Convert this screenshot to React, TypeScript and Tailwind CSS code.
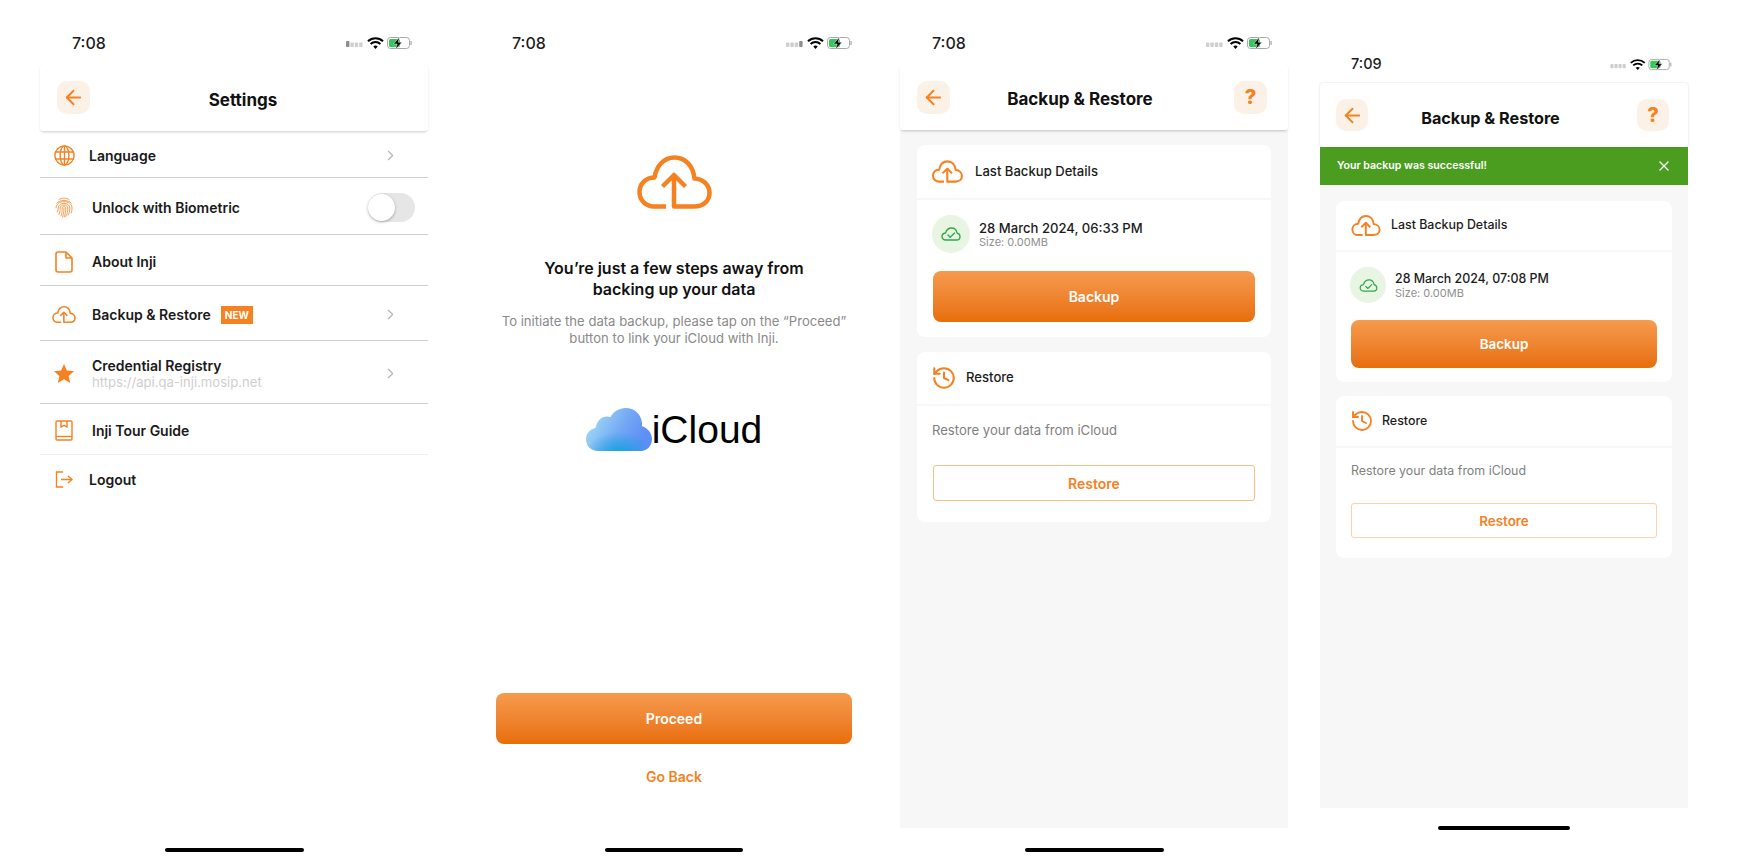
import { ArrowLeft, ChevronRight, History, X } from 'lucide-react'
import type { ReactNode } from 'react'

const orange = '#F68121'

function StatusBar({ time, dark, small }: { time: string; dark: number; small?: boolean }) {
  return (
    <div className={`flex items-center justify-between pr-4 ${small ? 'h-[83px] pt-[51px] pb-[6px] pl-[31px]' : 'h-[64px] pt-[30px] pb-[8px] pl-8'}`}>
      <span className={`font-medium text-[#1c1c1e] ${small ? 'text-[14.5px]' : 'text-base'}`}>{time}</span>
      <svg width={small ? 62 : 66} height={small ? 13 : 14} viewBox="0 0 66 14">
        {[0, 1, 2, 3].map(i => (
          <rect key={i} x={i * 4.4} y={i === dark ? 5 : 6.5} width="3.4" height={i === dark ? 6 : 4.5} rx="0.8" fill={i === dark ? '#8e8e8e' : '#cfcfcf'} />
        ))}
        <path d="M22 5.2a11 11 0 0 1 15 0M24.6 8a7.2 7.2 0 0 1 9.8 0" fill="none" stroke="#000" strokeWidth="2" />
        <path d="M27.3 10.6a3.3 3.3 0 0 1 4.4 0L29.5 13z" fill="#000" />
        <rect x="41.5" y="1.5" width="22" height="11" rx="3" fill="none" stroke="#a8a8a8" />
        <rect x="43" y="3" width="11" height="8" rx="1.5" fill="#35c759" />
        <rect x="64.5" y="5" width="1.2" height="4" fill="#a8a8a8" />
        <path d="M53.5 1 47.5 8h3.600l-1.600 5.500L56 6.200h-3.700z" fill="#000" stroke="#fff" strokeWidth="0.5" />
      </svg>
    </div>
  )
}

function SquareBtn({ children, small }: { children: ReactNode; small?: boolean }) {
  return (
    <div className={`flex items-center justify-center rounded-[10px] bg-[#FCF1E7] text-[#F68121] ${small ? 'h-[32px] w-[32px]' : 'h-[33px] w-[33px]'}`}>
      {children}
    </div>
  )
}

function CloudUpload({ w, h }: { w: number; h: number }) {
  return (
    <svg width={w} height={h} viewBox="0 0 75 54" fill="none" stroke={orange} strokeWidth={w > 50 ? 4.5 : 5} strokeLinejoin="round">
      <path d="M29 51.500H17C9 51.500 2.500 45.500 2.500 37S9 22.500 17.500 22.500C19.500 10.500 27 2.500 37.500 2.500S56 10.500 57.500 23.500C66 24 72.500 30 72.500 38S66 51.500 57 51.500H37V20" />
      <path d="M25.500 31.500 37 20l11.500 11.500" />
    </svg>
  )
}

function CloudOk({ w, h }: { w: number; h: number }) {
  return (
    <svg width={w} height={h} viewBox="0 0 20 14" fill="none" stroke="#2FA84A" strokeWidth="1.3" strokeLinejoin="round" strokeLinecap="round">
      <path d="M4.600 13C2.500 13 1 11.500 1 9.500S2.500 6.300 4.500 6C5.500 3 7.500 1 10.500 1S15.500 3 16 6C17.800 6.500 19 7.800 19 9.700S17.500 13 15.500 13z" />
      <path d="M7 8l2.200 2.200L13.500 6" />
    </svg>
  )
}

function Globe() {
  return (
    <svg width="21" height="21" viewBox="0 0 21 21" fill="none" stroke={orange} strokeWidth="1.4">
      <circle cx="10.500" cy="10.500" r="9.600" />
      <ellipse cx="10.500" cy="10.500" rx="4.400" ry="9.600" />
      <path d="M1.600 7h17.800M1.600 14h17.800M10.500 1v19" />
    </svg>
  )
}

function FingerprintIcon() {
  return (
    <svg width="18" height="21" viewBox="0 0 18 21" fill="none" stroke={orange} strokeWidth="0.9" strokeLinecap="round" opacity="0.85">
      <path d="M4 2.500C7 .6 11 .6 14 2.500" />
      <path d="M1.800 6C5 2.600 13 2.600 16.200 6" />
      <path d="M1 11C1 6.500 5 4.600 9 4.600s8 2 8 6.400c0 2-.2 3.400-.8 5" />
      <path d="M2.200 15c1-1.500 1-2.800 1-4 0-3 2.600-4.600 5.800-4.600s5.800 1.600 5.800 4.600c0 3-.5 5-1.600 7" />
      <path d="M3.800 17.500C5 15.500 5.200 13 5.200 11c0-2 1.700-3 3.800-3s3.800 1 3.800 3c0 3.500-.5 6-2 8.500" />
      <path d="M6 19c1-2 1.200-5 1.200-8 0-1 .8-1.500 1.800-1.500s1.800.6 1.800 1.500c0 3-.4 6-1.600 9" />
      <path d="M9 11c0 3-.4 6-1.400 9" />
    </svg>
  )
}

function FileIcon() {
  return (
    <svg width="18" height="22" viewBox="0 0 18 22" fill="none" stroke={orange} strokeWidth="1.6" strokeLinejoin="round">
      <path d="M3 1h8l6 6v12a2 2 0 0 1-2 2H3a2 2 0 0 1-2-2V3a2 2 0 0 1 2-2z" />
      <path d="M11 1v6h6" />
    </svg>
  )
}

function StarIcon() {
  return (
    <svg width="20" height="19" viewBox="0 0 20 19" fill={orange}>
      <path d="M10 0l2.900 6.500 7.100.7-5.400 4.700 1.600 7L10 15.200 3.800 18.900l1.600-7L0 7.200l7.100-.7z" />
    </svg>
  )
}

function BookIcon() {
  return (
    <svg width="18" height="21" viewBox="0 0 18 21" fill="none" stroke={orange} strokeWidth="1.4">
      <rect x="1" y="1" width="16" height="19" rx="1" />
      <path d="M1 16.500h16" />
      <path d="M6 1v6l3-1.600L12 7V1" />
    </svg>
  )
}

function LogoutIcon() {
  return (
    <svg width="18" height="17" viewBox="0 0 18 17" fill="none" stroke={orange} strokeWidth="1.4">
      <path d="M8 1H1.500v15H8" />
      <path d="M6 8.500h11M13 5l4 3.500L13 12" />
    </svg>
  )
}

function ICloudLogo() {
  const d = 'M12 43C5 43 0 38 0 31.500c0-6 4-10.500 9.500-11.500C11 13 15 8.500 21 8.500c1.500 0 2.500.2 3.500.6C27.500 3.500 33 0 39.500 0 48.500 0 55 6 56 15c-.1 1 0 2 0 3 5.500 2 10 7 10 13 0 7-5 12-11.500 12z'
  return (
    <svg width="66" height="43" viewBox="0 0 66 43">
      <defs>
        <linearGradient id="cloud-a" x1="0.1" y1="0.3" x2="0.9" y2="0.6">
          <stop offset="0" stopColor="#9BD6F4" />
          <stop offset="0.55" stopColor="#74A8F5" />
          <stop offset="1" stopColor="#5E8FF5" />
        </linearGradient>
        <radialGradient id="cloud-b" cx="0.5" cy="1.05" r="0.5">
          <stop offset="0" stopColor="#14A3DE" />
          <stop offset="1" stopColor="#14A3DE" stopOpacity="0" />
        </radialGradient>
      </defs>
      <path d={d} fill="url(#cloud-a)" />
      <path d={d} fill="url(#cloud-b)" />
    </svg>
  )
}

function Row({ icon, label, sub, badge, chevron, toggle, pl, h, line }: {
  icon: ReactNode
  label: string
  sub?: string
  badge?: boolean
  chevron?: boolean
  toggle?: boolean
  pl: string
  h: string
  line?: string
}) {
  return (
    <div className={`flex items-center border-b pt-[3px] ${h} ${line ?? 'border-[#cfcfcf]'}`}>
      <div className="flex w-[46px] shrink-0 justify-center pl-[2px]">{icon}</div>
      <div className={`flex flex-1 items-center ${pl}`}>
        <div>
          <div className="flex items-center gap-[10px]">
            <span className="text-[14px] leading-[18px] font-semibold text-[#1a1a1a]">{label}</span>
            {badge && (
              <span className="bg-[#F68121] px-[4px] py-[2px] text-[10px] leading-[14px] font-bold text-white">NEW</span>
            )}
          </div>
          {sub && <p className="text-[13.1px] leading-[15px] text-[#cfcfcf]">{sub}</p>}
        </div>
      </div>
      {chevron && <ChevronRight size={17} strokeWidth={1.6} className="mr-[29px] text-[#b5b5b5]" />}
      {toggle && (
        <div className="mr-[13px] flex h-[29px] w-[47px] items-center rounded-full bg-[#e6e6e6]">
          <div className="h-[27px] w-[27px] rounded-full bg-white shadow-[0_1px_3px_rgba(0,0,0,0.3)]" />
        </div>
      )}
    </div>
  )
}

function HomeBar({ width }: { width: string }) {
  return <div className={`mx-auto h-1 rounded-full bg-black ${width}`} />
}

function BackupPanel({ date, small }: { date: string; small?: boolean }) {
  const body = small ? 'text-[12.4px]' : 'text-[13.1px]'
  const action = small ? 'text-[13.4px]' : 'text-[14px]'
  return (
    <div className={`bg-[#f7f7f7] ${small ? 'h-[623px] px-4 pt-4' : 'h-[698px] px-[17px] pt-[15px]'}`}>
      <div className={`rounded-[8px] bg-white ${small ? 'h-[181px]' : 'h-[192px]'}`}>
        <div className={`flex items-center border-b-2 border-[#f7f7f7] pl-[15px] ${small ? 'h-[51px] gap-[10px]' : 'h-[55px] gap-[12px]'}`}>
          {small ? <CloudUpload w={30} h={21} /> : <CloudUpload w={31} h={23} />}
          <span className={`font-medium text-[#1c1c1c] ${body}`}>Last Backup Details</span>
        </div>
        <div className={`flex items-center ${small ? 'gap-[9px] pt-[15px] pl-[14px]' : 'gap-[9px] pt-[15px] pl-[15px]'}`}>
          <div className={`flex items-center justify-center rounded-full bg-[#E8F5E2] ${small ? 'h-[36px] w-[36px]' : 'h-[38px] w-[38px]'}`}>
            <CloudOk w={small ? 19 : 20} h={small ? 13 : 14} />
          </div>
          <div>
            <p className={`leading-[16px] font-medium text-[#1c1c1c] ${body}`}>{date}</p>
            <p className="text-[11px] leading-[13px] text-[#8f8f8f]">Size: 0.00MB</p>
          </div>
        </div>
        <div className={`flex items-center justify-center rounded-[8px] bg-linear-to-b from-[#F59B4C] to-[#E86E04] font-semibold text-white ${action} ${small ? 'mx-[15px] mt-[17px] h-[48px]' : 'mx-4 mt-[18px] h-[51px]'}`}>
          Backup
        </div>
      </div>
      <div className={`rounded-[8px] bg-white ${small ? 'mt-[14px] h-[162px]' : 'mt-[15px] h-[170px]'}`}>
        <div className={`flex items-center border-b-2 border-[#f7f7f7] pl-[14px] ${small ? 'h-[52px] gap-[8px]' : 'h-[54px] gap-[9px]'}`}>
          <History size={small ? 24 : 26} strokeWidth={1.9} className="text-[#F68121]" />
          <span className={`font-medium text-[#1c1c1c] ${body}`}>Restore</span>
        </div>
        <p className={`pl-[15px] leading-[18px] text-[#7f7f7f] ${body} ${small ? 'pt-[14px]' : 'pt-[15px]'}`}>Restore your data from iCloud</p>
        <div className={`flex items-center justify-center rounded-[3px] border font-semibold text-[#F68121] ${action} ${small ? 'mx-[15px] mt-[23px] h-[35px] border-[#FAD2AC] pt-[2px]' : 'mx-4 mt-[26px] h-[36px] border-[#F8BE88]'}`}>
          Restore
        </div>
      </div>
    </div>
  )
}

function BackupHeader({ small }: { small?: boolean }) {
  return (
    <div className={`relative z-10 flex items-center justify-between rounded-[3px] bg-white ${small ? 'h-[64px] pr-[19px] pl-4 shadow-[0_0_2px_rgba(0,0,0,0.18)]' : 'h-[66px] pr-[21px] pl-[17px] shadow-[0_2px_3px_-1px_rgba(0,0,0,0.22),0_0_1px_rgba(0,0,0,0.06)]'}`}>
      <SquareBtn small={small}><ArrowLeft size={23} strokeWidth={2} /></SquareBtn>
      <h1 className={`pt-[6px] font-bold text-[#111] ${small ? 'mr-[24px] text-[16.2px]' : 'mr-[24px] text-[17px]'}`}>Backup &amp; Restore</h1>
      <SquareBtn small={small}><span className="text-[20px] font-extrabold">?</span></SquareBtn>
    </div>
  )
}

export default function App() {
  return (
    <div className="flex h-[862px] w-[1740px] overflow-hidden bg-white pl-10 font-['Inter',sans-serif]">
      {/* Settings */}
      <div className="flex w-[388px] flex-col">
        <StatusBar time="7:08" dark={0} />
        <div className="relative z-10 flex h-[67px] items-center rounded-[3px] bg-white pl-[17px] shadow-[0_2px_3px_-1px_rgba(0,0,0,0.2),0_0_1px_rgba(0,0,0,0.06)]">
          <SquareBtn><ArrowLeft size={23} strokeWidth={2} /></SquareBtn>
          <h1 className="flex-1 pt-[6px] pr-[32px] text-center text-[17px] font-bold text-[#111]">Settings</h1>
        </div>
        <Row h="h-[47px]" pl="pl-[3px]" icon={<Globe />} label="Language" chevron />
        <Row h="h-[57px]" pl="pl-[6px]" icon={<FingerprintIcon />} label="Unlock with Biometric" toggle />
        <Row h="h-[51px]" pl="pl-[6px]" icon={<FileIcon />} label="About Inji" />
        <Row h="h-[55px]" pl="pl-[6px]" icon={<CloudUpload w={24} h={17} />} label="Backup & Restore" badge chevron />
        <Row h="h-[63px]" pl="pl-[6px]" icon={<StarIcon />} label="Credential Registry" sub="https://api.qa-inji.mosip.net" chevron />
        <Row h="h-[51px]" pl="pl-[6px]" icon={<BookIcon />} label="Inji Tour Guide" line="border-[#efefef]" />
        <Row h="h-[47px]" pl="pl-[3px]" icon={<LogoutIcon />} label="Logout" line="border-transparent" />
        <div className="mt-auto pb-[10px]">
          <HomeBar width="w-[139px]" />
        </div>
      </div>

      {/* iCloud prompt */}
      <div className="ml-[52px] flex w-[388px] flex-col">
        <StatusBar time="7:08" dark={3} />
        <div className="flex flex-col items-center">
          <div className="mt-[91px]"><CloudUpload w={75} h={54} /></div>
          <h2 className="mt-[49px] text-center text-[16px] leading-[21px] font-semibold text-[#111]">
            You’re just a few steps away from<br />backing up your data
          </h2>
          <p className="mt-[13px] text-center text-[13.1px] leading-[17px] text-[#8a8a8a]">
            To initiate the data backup, please tap on the “Proceed”<br />button to link your iCloud with Inji.
          </p>
          <div className="mt-[61px] flex items-center">
            <ICloudLogo />
            <span className="font-['Liberation_Sans',sans-serif] text-[39px] leading-[43px] text-black">iCloud</span>
          </div>
        </div>
        <div className="mx-4 mt-auto flex h-[51px] items-center justify-center rounded-[8px] bg-linear-to-b from-[#F59B4C] to-[#E86E04] text-[14px] font-semibold text-white">
          Proceed
        </div>
        <p className="mt-[24px] text-center text-[14px] leading-[18px] font-semibold text-[#F68121]">Go Back</p>
        <div className="mt-[62px] pb-[10px]">
          <HomeBar width="w-[138px]" />
        </div>
      </div>

      {/* Backup & Restore */}
      <div className="ml-8 flex w-[388px] flex-col">
        <StatusBar time="7:08" dark={-1} />
        <BackupHeader />
        <BackupPanel date="28 March 2024, 06:33 PM" />
        <div className="mt-auto pb-[10px]">
          <HomeBar width="w-[139px]" />
        </div>
      </div>

      {/* Backup success */}
      <div className="ml-8 flex w-[368px] flex-col">
        <StatusBar time="7:09" dark={-1} small />
        <BackupHeader small />
        <div className="flex h-[38px] items-center justify-between bg-[#4B9D20] pr-[16px] pl-[17px]">
          <span className="text-[10.6px] font-semibold text-white">Your backup was successful!</span>
          <X size={16} strokeWidth={1.8} className="text-white" />
        </div>
        <BackupPanel date="28 March 2024, 07:08 PM" small />
        <div className="mt-auto pb-[32px]">
          <HomeBar width="w-[132px]" />
        </div>
      </div>
    </div>
  )
}
